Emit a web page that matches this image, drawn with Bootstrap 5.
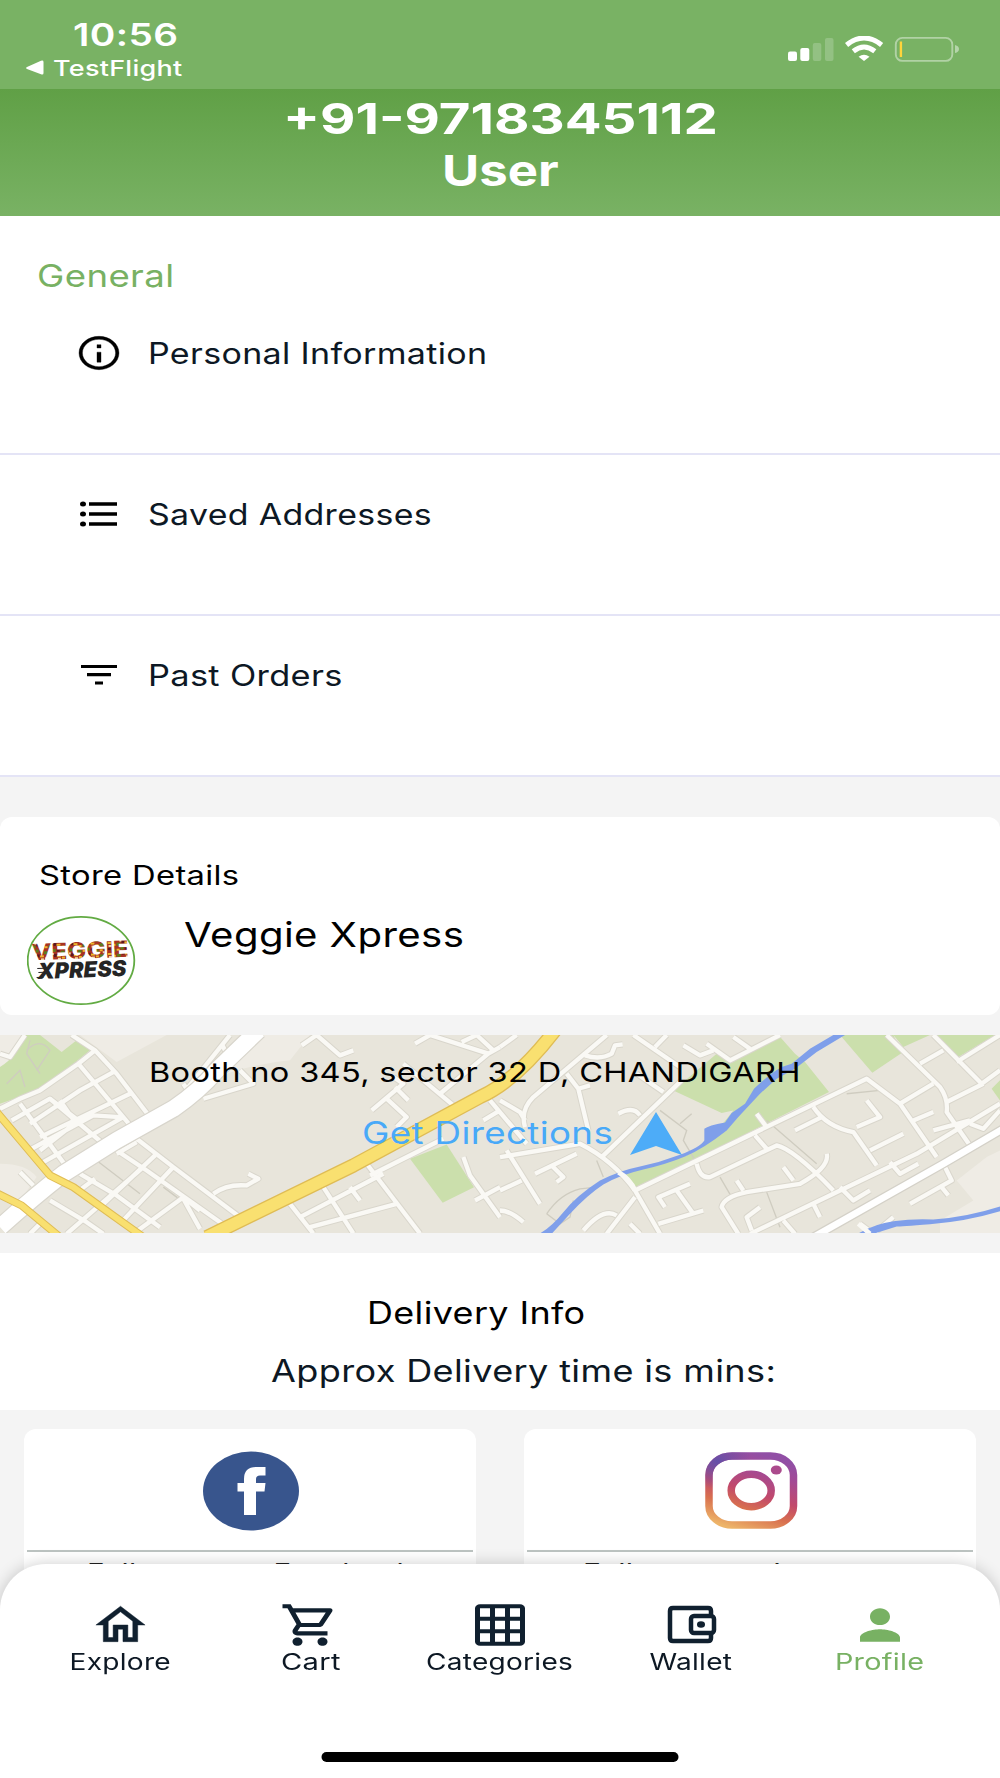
<!DOCTYPE html>
<html lang="en">
<head>
    <meta charset="UTF-8">
    <meta name="viewport" content="width=device-width, initial-scale=1.0">
    <title>Profile</title>
    <link href="https://cdn.jsdelivr.net/npm/bootstrap@5.3.0/dist/css/bootstrap.min.css" rel="stylesheet">
    <style>
        body { font-family: Inter, "Liberation Sans", sans-serif; background: #f4f4f4; color: #000; height: 1778px; overflow: hidden; line-height: 40px; }
        svg { display: block; flex: none; }
        /* wide lettering, the script below sets the stretch */
        .stretch { display: inline-block; white-space: nowrap; transform-origin: 0 50%; letter-spacing: .01em; }
        .ink { color: #0d1824; }
        .green { color: #78b163; }
        .status-bar { height: 89px; background: #79b264; padding: 18px 40px 0 26px; }
        .status-icons { margin-top: 18px; }
        .clock { font-size: 31px; font-weight: 600; line-height: 34px; padding-left: 47px; }
        .back-app { font-size: 22px; font-weight: 500; line-height: 32px; gap: 9px; }
        .user-head { height: 127px; padding-top: 3px; font-size: 43px; font-weight: 700; line-height: 52px; background: linear-gradient(#60a046, #79b264); }
        .user-head .stretch { letter-spacing: 0; }
        .section-title { height: 78.5px; padding: 40px 0 0 37px; font-size: 31px; }
        .menu-row { height: 160.8px; padding: 39.5px 0 0 75px; border-bottom: 2px solid #e4e4f6; font-size: 29.3px; gap: 25px; }
        .menu-row svg { margin-top: -1px; }
        .store-card { height: 198.5px; margin-top: 40px; padding: 39px 0 0 27px; border-radius: 12px; }
        .store-title { font-size: 27px; padding-left: 12px; }
        .store-logo { margin-top: 19px; }
        .store-name { font-size: 34px; padding-left: 48px; margin-top: 19px; }
        .map-box { height: 198.5px; margin-top: 19.5px; }
        .map-text { padding: 17px 0 0 149px; font-size: 27.5px; }
        .directions { color: #48a9f8; font-size: 31px; margin: 20px 0 0 213px; gap: 17px; }
        .delivery { height: 157px; margin-top: 19.5px; padding-top: 40px; font-size: 30.5px; }
        .delivery-title { padding-left: 367px; }
        .delivery-time { padding: 18px 0 0 271px; }
        .social { margin: 19.5px 24px 0; gap: 48px; }
        .social-card { border-radius: 12px; height: 200px; padding: 22px 3px 0; font-size: 27px; line-height: 43px; color: #222; }
        .social-card .rule { height: 2px; background: #bcc3c1; margin-top: 19px; width: 100%; }
        .social-card svg { margin-left: 1px; }
        .tab-bar { height: 214.5px; border-radius: 46px 46px 0 0; padding: 36px 25px 0; box-shadow: 0 0 16px rgba(0, 0, 0, .2); }
        .tab-item { width: 190px; font-size: 22.3px; line-height: 28px; }
        .tab-item svg { margin-bottom: -2px; }
        .nudge { padding-left: 2px; }
        .home-line { width: 357px; height: 10px; border-radius: 5px; background: #000; bottom: 16px; }
    </style>
    <script src="https://cdn.jsdelivr.net/npm/bootstrap@5.3.0/dist/js/bootstrap.bundle.min.js"></script>
</head>
<body>

<!-- Status bar -->
<div class="status-bar d-flex justify-content-between align-items-start text-white">
    <div>
        <div class="clock"><span class="stretch" data-width="105">10:56</span></div>
        <div class="back-app d-flex align-items-center">
            <svg width="18" height="16" viewBox="0 0 18 16"><path d="M1 7 15 .8Q17.500 0 17.500 2V13Q17.500 15.200 15 14.200L1 9Q-.8 8 1 7Z" fill="#fff"/></svg>
            <span class="stretch" data-width="130">TestFlight</span>
        </div>
    </div>
    <svg class="status-icons" width="172" height="27" viewBox="0 0 172 27">
        <g fill="#fff">
            <rect x="0" y="15.500" width="9" height="9.500" rx="2"/>
            <rect x="12.300" y="12" width="9" height="13" rx="2"/>
            <rect x="24.800" y="7" width="8.500" height="18" rx="2" opacity=".2"/>
            <rect x="37" y="2" width="8.500" height="23" rx="2" opacity=".2"/>
            <path d="M76 25 70.600 20.800Q76 16.600 81.500 20.800Z"/>
        </g>
        <g fill="none" stroke="#fff" stroke-width="5">
            <path d="M58.600 9Q76-5 93.600 9"/>
            <path d="M65.300 15.300Q76 6.800 86.800 15.300"/>
        </g>
        <rect x="107.800" y="1.900" width="56.500" height="23" rx="6.500" fill="none" stroke="#fff" stroke-opacity=".42" stroke-width="1.900"/>
        <rect x="111.700" y="5.500" width="2.400" height="15.500" fill="#ffd43b"/>
        <path d="M167 9Q171 10 171 13T167 17Z" fill="#fff" opacity=".45"/>
    </svg>
</div>

<!-- User -->
<div class="user-head text-white text-center">
    <div><span class="stretch mid" data-width="435">+91-9718345112</span></div>
    <div><span class="stretch mid" data-width="117">User</span></div>
</div>

<!-- General menu -->
<div class="bg-white">
    <div class="section-title green"><span class="stretch" data-width="137">General</span></div>
    <div class="menu-row d-flex align-items-start ink">
        <svg width="48" height="40" viewBox="0 0 24 24" preserveAspectRatio="none" fill="#000"><path d="M11 7h2v2h-2zm0 4.500h2v6h-2zm1-9.500C6.480 2 2 6.480 2 12s4.480 10 10 10 10-4.480 10-10S17.520 2 12 2zm0 18.200c-4.500 0-8.300-3.700-8.300-8.200s3.800-8.200 8.300-8.200 8.300 3.700 8.300 8.200-3.800 8.200-8.300 8.200z" stroke="#000" stroke-width=".2"/></svg>
        <span class="stretch" data-width="340">Personal Information</span>
    </div>
    <div class="menu-row d-flex align-items-start ink">
        <svg width="48" height="40" viewBox="0 0 48 40" stroke="#000" stroke-width="3.400"><path d="M14 10H42M14 20H42M14 30H42"/><g stroke="none" fill="#000"><ellipse cx="8" cy="10" rx="3" ry="2.500"/><ellipse cx="8" cy="20" rx="3" ry="2.500"/><ellipse cx="8" cy="30" rx="3" ry="2.500"/></g></svg>
        <span class="stretch" data-width="284.500">Saved Addresses</span>
    </div>
    <div class="menu-row d-flex align-items-start ink">
        <svg width="48" height="40" viewBox="0 0 48 40" stroke="#000" stroke-width="3.200"><path d="M6 11.500H42M12 19.700H36M20 28H28"/></svg>
        <span class="stretch" data-width="194.500">Past Orders</span>
    </div>
</div>

<!-- Store -->
<div class="store-card bg-white">
    <div class="store-title"><span class="stretch" data-width="200">Store Details</span></div>
    <div class="d-flex align-items-start">
        <svg class="store-logo" width="109" height="91" viewBox="0 0 109 91">
            <defs>
                <pattern id="veg" width="17" height="11" patternUnits="userSpaceOnUse">
                    <rect width="17" height="11" fill="#a83222"/>
                    <path d="M0 2h4v3H0zM9 0h3v3H9zM5 7h4v3H5z" fill="#5d7c1d"/>
                    <path d="M5 2h3v2H5zM13 6h4v2h-4zM1 8h3v2H1z" fill="#edb72b"/>
                    <path d="M10 5h3v3h-3zM13 1h3v2h-3z" fill="#5b1720"/>
                    <path d="M8 4h2v2H8zM14 9h3v2h-3z" fill="#f0d9a0"/>
                </pattern>
            </defs>
            <ellipse cx="54" cy="45.500" rx="53.300" ry="43.700" fill="#fff" stroke="#62ab43" stroke-width="1.800"/>
            <g font-family="Inter, sans-serif" transform="rotate(-2 54 45)">
                <text x="5" y="43.500" font-size="22.500" font-weight="800" textLength="97" lengthAdjust="spacingAndGlyphs" fill="url(#veg)">VEGGIE</text>
                <text x="10" y="62.500" font-size="22" font-weight="900" font-style="italic" textLength="89" lengthAdjust="spacingAndGlyphs" fill="#252525">XPRESS</text>
                <path d="M10 52h7M11 56h6M9 61h7" stroke="#252525"/>
            </g>
        </svg>
        <div class="store-name"><span class="stretch" data-width="280">Veggie Xpress</span></div>
    </div>
</div>

<!-- Map -->
<div class="map-box position-relative overflow-hidden">
    <svg class="position-absolute top-0 start-0" width="1000" height="198.500" viewBox="0 44 3000 595" preserveAspectRatio="none">
        <rect y="44" width="3000" height="595" fill="#e8e5db"/>
        <g fill="#efece5">
            <path d="M240 44H500L350 125ZM650 170 740 44H930L870 120Q760 130 650 170ZM0 44H75L30 130 0 140ZM0 430Q80 430 110 470L60 540 0 520Z"/>
            <path d="M2960 410 3000 390V639H2820V600L2920 540 2870 480Z"/>
        </g>
        <g fill="#cbdfac">
            <path d="M75 44H120L185 95 230 60 270 90 130 205 0 250V140Q50 110 75 44Z"/>
            <path d="M1230 415 1340 372 1422 500 1328 547Z"/>
            <path d="M2020 210 2150 100 2200 120 2335 44 2385 100 2415 125 2487 215 2080 420 1905 500 1870 460 2060 405 2140 345 2200 270 2165 278Z"/>
            <path d="M2520 44H2680L2705 98 2617 157ZM2680 44H2790L2710 80ZM2810 44H2985L2875 110ZM2975 205 3000 180V240Z"/>
        </g>
        <g fill="none" stroke="#cfccc0" stroke-width="4">
            <path d="M90 60 80 100 120 160M80 90Q120 50 150 90L110 150M20 190 60 150 75 200M290 420 420 520M490 500 570 560M150 540 260 600M1980 270 2060 330 2050 360 2085 420M2040 310 2075 280M1790 420 1810 470M1640 580Q1680 520 1740 505L1790 500M1640 580 1680 610 1710 590 1720 540M2300 300 2450 430M2160 470 2195 530M2300 515 2340 620M2540 220 2640 210"/>
        </g>
        <!-- streets: a grey casing under the white line -->
        <g id="streets" fill="none" stroke="#d9d6cc" stroke-width="19" stroke-linejoin="round">
            <path d="M215 44 285 90 350 160 450 290M285 90 235 130 120 210 60 235 0 265M235 130 395 320M150 235 310 370M60 250 200 440M90 310 240 210 340 155M120 350 390 220M35 300 150 235 235 300 120 390M180 240 225 305M95 385 280 285 360 290M130 425 370 290M0 100 30 110 75 44"/>
            <path d="M410 355 520 440 720 590M350 390 440 450 670 612M240 460 350 525 480 620M150 540 260 605 310 640M410 365 350 400M465 405 300 560M520 440 360 610M200 640 430 440M400 640 550 530 600 570M550 535 600 625M640 520Q680 490 740 495L775 475 745 460M60 455 100 495M245 505 285 475M120 610 90 640"/>
            <path d="M560 205 550 190M565 200 690 44M610 235 760 190 720 150M665 70 690 120M905 75 950 44 1020 105 1060 90M1245 70 1290 44 1465 100 1500 80M1385 65 1430 44 1480 90M1465 100 1320 220M1210 130 1360 255M1115 270 1210 190 1180 170M1160 235 1220 290 1190 320M1185 200 1225 240"/>
            <path d="M1110 465 1330 355M1100 430 1260 639M970 500 1060 639M870 550 940 639M900 590 1150 460M930 620 1190 550M1050 500 1080 540M1390 410 1410 465 1500 590M1425 540 1500 500M1470 240 1580 370M1450 300 1500 270"/>
            <path d="M1500 240 1560 275 1575 300M1500 80 1550 44M1820 44 1600 230Q1560 270 1575 320M1700 160 1735 205 1765 330M1735 205 1770 195M1755 105Q1800 120 1835 100L1845 75 1868 72M1900 44 2040 140M1965 80 2000 44M1805 410 2045 180M1990 215 1910 160M1855 280Q1900 255 1920 285M1500 410 1740 370Q1840 420 1905 510L1980 640M1520 390 1620 550M1500 510 1565 480M1605 460 1730 400M1655 435 1690 470 1670 485"/>
            <path d="M2050 75 2100 105 2140 90M2120 70 2190 120 2340 44M2200 50 2250 85M1905 510 2600 175 2700 250 2800 190M2660 44 2820 200Q2845 235 2840 275L2910 375M2800 44 2945 190 3000 150M2950 190 2840 245M2760 130 2830 90M2870 125 3000 44M2440 260Q2480 320 2560 335L2630 435M2385 330 2465 290M2270 280 2300 320M2090 430Q2100 475 2130 470L2330 375Q2380 385 2500 510M2265 345 2300 385M2215 640 2165 560Q2170 530 2240 515L2400 490Q2490 440 2480 400M1820 640 1905 530M1975 610 2110 570M2070 490 1975 530 1995 560M2030 510 2080 580M1750 630Q1810 560 1850 585M2250 640 2500 520 2750 400 3000 250M2350 440 2380 480M2210 480 2230 510M2440 550 2460 590M2520 500 2560 540 2610 510M2350 600 2385 640M2280 560 2240 590 2255 630M2600 240 2640 290 2570 320M2700 250 2810 410M2740 300 2800 275M2610 390 2710 340M2670 425 2700 460 2755 430M2800 330 2910 300M2580 610 2620 640 2680 590M2730 550 2855 480 2830 430M2825 500 2845 525M2910 310 2950 325 3000 270M1500 570Q1530 570 1570 605M1890 610 1920 640"/>
        </g>
        <g id="streets-top" fill="none" stroke="#faf9f5" stroke-width="13" stroke-linejoin="round"></g>
        <!-- main roads -->
        <g fill="none" stroke-linejoin="round">
            <path d="M0 620Q100 530 190 460L350 360 520 265Q600 210 650 150L775 30" stroke="#d8d5cc" stroke-width="56"/>
            <path d="M0 620Q100 530 190 460L350 360 520 265Q600 210 650 150L775 30" stroke="#fff" stroke-width="49"/>
            <path d="M2440 650 2830 430 3010 325" stroke="#d4d1c8" stroke-width="28"/>
            <path d="M2440 650 2830 430 3010 325" stroke="#fff" stroke-width="20"/>
            <path d="M-10 275 150 465 220 500 430 650M-10 518 65 555 180 650" stroke="#dfbc55" stroke-width="24"/>
            <path d="M620 650 1060 435 1440 230Q1550 180 1665 30" stroke="#dfbc55" stroke-width="43"/>
            <path d="M620 650 1060 435 1440 230Q1550 180 1665 30" stroke="#f9e070" stroke-width="35"/>
            <path d="M-10 275 150 465 220 500 430 650M-10 518 65 555 180 650" stroke="#f9e070" stroke-width="18"/>
        </g>
        <!-- river -->
        <path d="M1608 645Q1650 625 1690 575T1800 480Q1860 450 1920 438T2040 403 2113 360V325Q2125 315 2175 306L2195 278 2235 250 2262 205Q2310 160 2345 140L2375 130 2430 85 2500 44H2535L2450 95 2385 145 2330 175 2280 220 2215 290 2180 330Q2110 385 2055 408T1930 447 1810 492Q1760 525 1710 580T1650 645Z" fill="#7f9fea"/>
        <path d="M2565 645Q2620 610 2680 602T2800 597Q2900 590 3000 558V572Q2900 602 2790 611T2690 618L2620 640Z" fill="#7f9fea"/>
        <path d="M1855 455Q1890 475 1905 510M2575 610 2610 640" fill="none" stroke="#faf9f5" stroke-width="14"/>
    </svg>
    <div class="map-text position-relative">
        <div><span class="stretch" data-width="652">Booth no 345, sector 32 D, CHANDIGARH</span></div>
        <div class="directions d-flex align-items-center">
            <span class="stretch" data-width="251">Get Directions</span>
            <svg width="52" height="43" viewBox="0 0 52 43"><path d="M26 0 52 43 26 34 0 43Z" fill="#4dacf8"/></svg>
        </div>
    </div>
</div>

<!-- Delivery -->
<div class="delivery bg-white">
    <div class="delivery-title"><span class="stretch" data-width="218">Delivery Info</span></div>
    <div class="delivery-time ink"><span class="stretch" data-width="505">Approx Delivery time is mins:</span></div>
</div>

<!-- Social links -->
<div class="social d-flex">
    <div class="social-card bg-white flex-fill w-50 d-flex flex-column align-items-center">
        <svg width="96" height="80" viewBox="0 0 96 80">
            <ellipse cx="48" cy="40" rx="48" ry="39.500" fill="#38558d"/>
            <path d="M41 64V40.500H34.500V32H41V28Q41 16 53 16H62.500V24.500H57Q53 24.500 53 28V32H62.500L61.500 40.500H53V64Z" fill="#fff"/>
        </svg>
        <div class="rule"></div>
        <span class="stretch mid" data-width="326">Follow us on Facebook</span>
    </div>
    <div class="social-card bg-white flex-fill w-50 d-flex flex-column align-items-center">
        <svg width="96" height="80" viewBox="0 0 96 80">
            <defs>
                <linearGradient id="insta" gradientUnits="userSpaceOnUse" x1="32" y1="78" x2="56" y2="2">
                    <stop offset="0" stop-color="#edb469"/>
                    <stop offset=".28" stop-color="#d8704f"/>
                    <stop offset=".5" stop-color="#c2496b"/>
                    <stop offset=".8" stop-color="#a24a96"/>
                    <stop offset="1" stop-color="#914fa5"/>
                </linearGradient>
                <radialGradient id="violet" cx=".1" cy=".08" r=".4">
                    <stop offset="0" stop-color="#6450a8"/>
                    <stop offset="1" stop-color="#6450a8" stop-opacity="0"/>
                </radialGradient>
            </defs>
            <g fill="none" stroke-width="7.500">
                <rect x="6" y="5" width="84.500" height="69" rx="23" ry="19" stroke="url(#insta)"/>
                <rect x="6" y="5" width="84.500" height="69" rx="23" ry="19" stroke="url(#violet)"/>
                <ellipse cx="48.200" cy="39.500" rx="20" ry="16.200" stroke="url(#insta)"/>
            </g>
            <ellipse cx="73.300" cy="19" rx="5.500" ry="4.500" fill="#ab4b8d"/>
        </svg>
        <div class="rule"></div>
        <span class="stretch mid" data-width="334">Follow us on Instagram</span>
    </div>
</div>

<!-- Bottom tabs -->
<div class="tab-bar bg-white fixed-bottom d-flex align-items-start ink">
    <div class="tab-item d-flex flex-column align-items-center">
        <svg width="59" height="50" viewBox="0 0 24 24" preserveAspectRatio="none" fill="#10202f"><path d="M12 5.690l5 4.500V18h-2v-6H9v6H7v-7.810l5-4.500M12 3L2 12h3v8h6v-6h2v6h6v-8h3L12 3z" stroke="#10202f" stroke-width=".2"/></svg>
        <span class="stretch mid" data-width="102">Explore</span>
    </div>
    <div class="tab-item d-flex flex-column align-items-center">
        <svg width="60" height="50" viewBox="0 0 24 24" preserveAspectRatio="none" fill="#10202f"><path d="M15.550 13c.75 0 1.410-.41 1.750-1.030l3.580-6.490A.996.996 0 0 0 20.010 4H5.210l-.94-2H1v2h2l3.600 7.590-1.350 2.440C4.520 15.370 5.480 17 7 17h12v-2H7l1.100-2h7.450zM6.160 6h12.150l-2.760 5H8.530L6.160 6zM7 18c-1.100 0-1.990.9-1.990 2S5.900 22 7 22s2-.9 2-2-.9-2-2-2zm10 0c-1.100 0-1.990.9-1.990 2s.89 2 1.990 2 2-.9 2-2-.9-2-2-2z"/></svg>
        <div class="nudge"><span class="stretch mid" data-width="60">Cart</span></div>
    </div>
    <div class="tab-item d-flex flex-column align-items-center">
        <svg width="60" height="50" viewBox="0 0 24 24" preserveAspectRatio="none" fill="none" stroke="#10202f" stroke-width="2"><rect x="3" y="3" width="18" height="18" rx="1"/><path d="M9 3V21M15 3V21M3 9H21M3 15H21"/></svg>
        <span class="stretch mid" data-width="147">Categories</span>
    </div>
    <div class="tab-item d-flex flex-column align-items-center">
        <svg width="60" height="50" viewBox="0 0 60 50" fill="none" stroke="#10202f" stroke-width="4.500"><path d="M51 15V11Q51 8 48 8H13Q10 8 10 11V38Q10 41 13 41H48Q51 41 51 38V34"/><rect x="31" y="16" width="23" height="17" rx="3"/><ellipse cx="41" cy="24.500" rx="4" ry="3.200" fill="#10202f" stroke="none"/></svg>
        <div class="nudge"><span class="stretch mid" data-width="83">Wallet</span></div>
    </div>
    <div class="tab-item d-flex flex-column align-items-center green">
        <svg width="60" height="50" viewBox="0 0 24 24" preserveAspectRatio="none" fill="#78b163"><path d="M12 12c2.210 0 4-1.790 4-4s-1.790-4-4-4-4 1.790-4 4 1.790 4 4 4zm0 2c-2.670 0-8 1.340-8 4v2h16v-2c0-2.660-5.330-4-8-4z"/></svg>
        <span class="stretch mid" data-width="89">Profile</span>
    </div>
    <div class="home-line position-absolute start-50 translate-middle-x"></div>
</div>

<script>
    // stretch each label to its width
    document.querySelectorAll(".stretch").forEach(el => {
        if (el.classList.contains("mid")) el.style.transformOrigin = "50% 50%";
        el.style.transform = "scaleX(" + el.dataset.width / el.offsetWidth + ")";
        // reserve the stretched width for the next item in the row
        if (!el.classList.contains("mid")) el.style.marginRight = (el.dataset.width - el.offsetWidth) + "px";
    });

    // the white lines repeat the street casings
    const streetsTop = document.getElementById("streets-top");
    document.querySelectorAll("#streets path").forEach(p => streetsTop.appendChild(p.cloneNode()));
</script>

</body>
</html>
